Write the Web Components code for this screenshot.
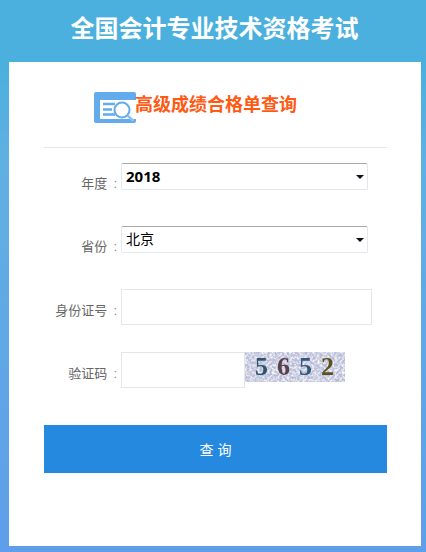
<!DOCTYPE html>
<html lang="zh">
<head>
<meta charset="utf-8">
<title>全国会计专业技术资格考试</title>
<style>
  html, body { margin: 0; height: 552px; overflow: hidden; }
  body { font-family: "Liberation Sans", "Noto Sans CJK SC", sans-serif; }
</style>
</head>
<body>
<exam-page>
  <exam-heading>高级成绩合格单查询</exam-heading>
  <form-row label="年度" top="15"><exam-select value="2018" bold></exam-select></form-row>
  <form-row label="省份" top="36"><exam-select value="北京"></exam-select></form-row>
  <form-row label="身份证号" top="36" center><exam-input width="251"></exam-input></form-row>
  <form-row label="验证码" top="27" center><exam-input width="124"></exam-input><exam-captcha code="5652"></exam-captcha></form-row>
  <exam-button>查 询</exam-button>
</exam-page>

<script>
class ExamPage extends HTMLElement {
  constructor() {
    super();
    this.attachShadow({ mode: "open" });
    this.shadowRoot.innerHTML = `
      <style>
        :host { display: flex; flex-direction: column; height: 552px; box-sizing: border-box;
          padding: 0 5px 6px 9px; background: linear-gradient(#4bb0dd 0, #4bb0dd 12%, #61b0e2 30%, #5f9eea 100%); }
        h1 { margin: 0; height: 62px; line-height: 57px; padding-right: 1px; text-align: center;
          color: #fff; font-size: 24px; font-weight: bold; }
        .card { flex: 1; background: #fff; padding: 0 34px 0 35px; }
      </style>
      <h1>全国会计专业技术资格考试</h1>
      <div class="card"><slot></slot></div>
    `;
  }
}

class ExamHeading extends HTMLElement {
  constructor() {
    super();
    this.attachShadow({ mode: "open" });
    this.shadowRoot.innerHTML = `
      <style>
        :host { display: flex; align-items: center; height: 85px; padding-left: 50px;
          border-bottom: 1px solid #e6e6e6; }
        svg { width: 42px; height: 32px; flex: none; margin-top: 7px; }
        span { margin-left: -1px; margin-top: -4px; color: #ff5a14; font-size: 18px; font-weight: bold; white-space: nowrap; }
      </style>
      <svg viewBox="0 0 42 32">
        <rect x="0" y="0" width="42" height="31" rx="2" fill="#62abed"/>
        <rect x="6" y="8" width="36" height="19" fill="#fff"/>
        <path d="M9 12h12M9 17.500h9M9 22.500h12" stroke="#62abed" stroke-width="2.500" fill="none"/>
        <circle cx="28" cy="18" r="7.500" fill="#fff" stroke="#62abed" stroke-width="2"/>
        <path d="M33.500 23.500l6 5.500" stroke="#8cc2f1" stroke-width="2.500"/>
      </svg>
      <span><slot></slot></span>
    `;
  }
}

class FormRow extends HTMLElement {
  constructor() {
    super();
    this.attachShadow({ mode: "open" });
  }
  connectedCallback() {
    const label = this.getAttribute("label");
    const top = this.getAttribute("top");
    const center = this.hasAttribute("center");
    this.shadowRoot.innerHTML = `
      <style>
        :host { display: flex; margin-top: ${top}px; }
        label { width: 77px; height: 12px; flex: none; box-sizing: border-box; padding-right: 4px; text-align: right;
          align-self: ${center ? "center" : "flex-start"}; margin-top: ${center ? "8px" : "15px"};
          color: #666; font-size: 13px; line-height: 12px; white-space: nowrap; }
        label span { margin-left: 6px; color: #888; }
        .field { display: flex; align-items: flex-start; }
      </style>
      <label>${label}<span>:</span></label>
      <div class="field"><slot></slot></div>
    `;
  }
}

class ExamSelect extends HTMLElement {
  constructor() {
    super();
    this.attachShadow({ mode: "open" });
  }
  connectedCallback() {
    const value = this.getAttribute("value");
    const font = this.hasAttribute("bold")
      ? 'bold 15px "Noto Sans", "Noto Sans CJK SC", sans-serif'
      : '14px "DejaVu Sans", "Noto Sans CJK SC", sans-serif';
    this.shadowRoot.innerHTML = `
      <style>
        :host { display: block; position: relative; width: 247px; height: 27px; }
        select { appearance: none; -webkit-appearance: none; display: block; width: 100%; height: 100%;
          box-sizing: border-box; margin: 0; padding: 0 0 2px 4px; background: #fff; outline: none;
          border: 1px solid #e3e8ef; border-top-color: #a9a9a9; border-radius: 2px;
          color: #000; font: ${font}; }
        i { position: absolute; right: 4px; top: 12px; border: 4px solid transparent; border-bottom: 0;
          border-top-color: #111; }
      </style>
      <select><option>${value}</option></select>
      <i></i>
    `;
  }
}

class ExamInput extends HTMLElement {
  constructor() {
    super();
    this.attachShadow({ mode: "open" });
  }
  connectedCallback() {
    const width = this.getAttribute("width");
    this.shadowRoot.innerHTML = `
      <style>
        :host { display: block; width: ${width}px; height: 36px; }
        input { display: block; width: 100%; height: 100%; box-sizing: border-box; margin: 0;
          border: 1px solid #e6e6e6; background: #fff; outline: none; }
      </style>
      <input type="text">
    `;
  }
}

class ExamCaptcha extends HTMLElement {
  constructor() {
    super();
    this.attachShadow({ mode: "open" });
  }
  connectedCallback() {
    const colours = ["#2f5470", "#5a3f4c", "#34587a", "#5a5220"];
    const digits = [...this.getAttribute("code")]
      .map((d, i) => `<b style="color:${colours[i]}">${d}</b>`).join("");
    this.shadowRoot.innerHTML = `
      <style>
        :host { display: block; position: relative; width: 100px; height: 30px; overflow: hidden; background: #b9bcd8; }
        svg { position: absolute; left: 0; top: 0; width: 100%; height: 100%; }
        .code { position: relative; display: flex; gap: 9px; padding-left: 10px; height: 30px; align-items: center;
          font: bold 26px "Liberation Serif", serif; filter: blur(.5px); }
        b { display: block; width: 13px; text-align: center; }
      </style>
      <svg viewBox="0 0 100 30" preserveAspectRatio="none">
        <filter id="grain"><feTurbulence type="fractalNoise" baseFrequency=".4" numOctaves="3" seed="7"/>
          <feColorMatrix values="0 0 0 0 .93  0 0 0 0 .95  0 0 0 0 .95  2.400 0 0 0 -.85"/></filter>
        <rect width="100" height="30" filter="url(#grain)"/>
      </svg>
      <div class="code">${digits}</div>
    `;
  }
}

class ExamButton extends HTMLElement {
  constructor() {
    super();
    this.attachShadow({ mode: "open" });
    this.shadowRoot.innerHTML = `
      <style>
        :host { display: block; margin-top: 37px; }
        button { display: block; width: 100%; height: 48px; margin: 0; padding: 0; border: 0;
          background: #2689e0; color: #fff; font: 14px "Liberation Sans", "Noto Sans CJK SC", sans-serif; }
      </style>
      <button><slot></slot></button>
    `;
  }
}

customElements.define("exam-page", ExamPage);
customElements.define("exam-heading", ExamHeading);
customElements.define("form-row", FormRow);
customElements.define("exam-select", ExamSelect);
customElements.define("exam-input", ExamInput);
customElements.define("exam-captcha", ExamCaptcha);
customElements.define("exam-button", ExamButton);
</script>
</body>
</html>
